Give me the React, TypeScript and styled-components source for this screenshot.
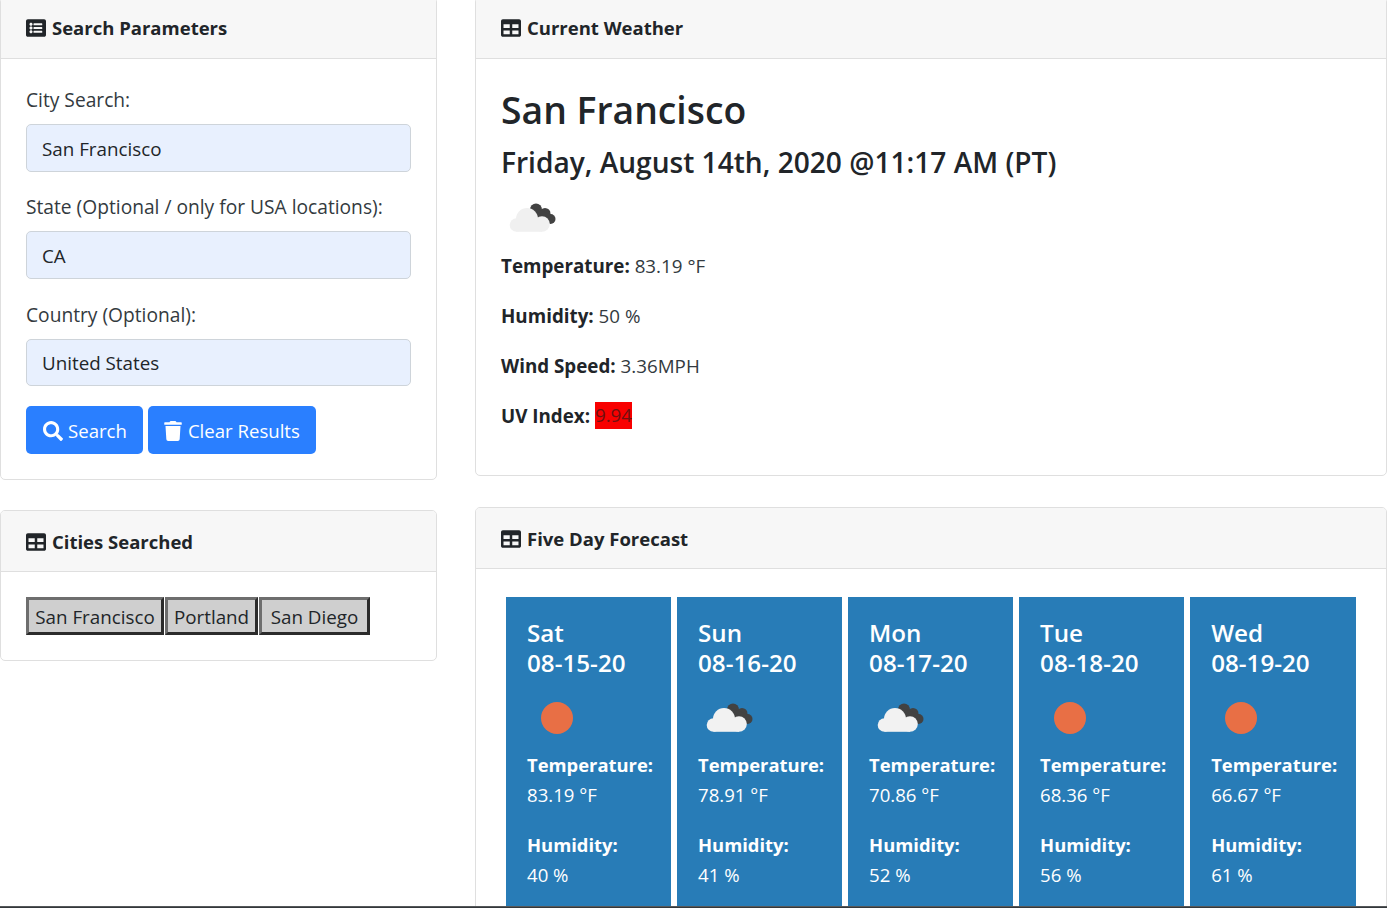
import React from "react";
import styled, { createGlobalStyle } from "styled-components";
import { FaListAlt, FaSearch, FaTable, FaTrash } from "react-icons/fa";

const GlobalStyle = createGlobalStyle`
  html, body {
    margin: 0;
    height: 908px;
    overflow: hidden;
    background: #fff;
  }
  body {
    font-family: "Open Sans", "Noto Sans", sans-serif;
    font-size: 18.8px;
    line-height: 30px;
    color: #212529;
  }
  * {
    box-sizing: border-box;
  }
`;

const Page = styled.div`
  display: grid;
  grid-template-columns: 437px 912px;
  column-gap: 38px;
  margin-top: -3px;
`;

const Column = styled.div`
  display: flex;
  flex-direction: column;
`;

const Card = styled.section<{ $gap?: number }>`
  border: 1px solid #dfdfdf;
  border-radius: 5px;
  margin-bottom: ${(p) => p.$gap ?? 0}px;
  background: #fff;
`;

const CardHeader = styled.header<{ $drop?: number }>`
  display: flex;
  align-items: center;
  gap: 6px;
  height: 61px;
  padding: ${(p) => p.$drop ?? 0}px 25px 1px;
  background: #f7f7f7;
  border-bottom: 1px solid #dfdfdf;
  border-radius: 4px 4px 0 0;
  font-size: 18.5px;
  font-weight: 700;
  svg {
    width: 20px;
    height: 20px;
  }
`;

const CardBody = styled.div`
  padding: 25px;
`;

const FormGroup = styled.div`
  margin-bottom: 19.8px;
`;

const Label = styled.label`
  display: block;
  padding-top: 1px;
  margin-bottom: 9px;
  font-size: 19.2px;
  color: #333a40;
`;

const TextInput = styled.input`
  display: block;
  width: 100%;
  height: 47.5px;
  padding: 2px 15px 0;
  border: 1px solid #ced4da;
  border-radius: 5px;
  background: #e8f0fe;
  font: inherit;
  color: #212529;
  outline: none;
`;

const ButtonRow = styled.div`
  display: flex;
  gap: 5px;
`;

const PrimaryButton = styled.button<{ $iconWidth: number }>`
  display: flex;
  align-items: center;
  gap: 5.5px;
  height: 48px;
  padding: 2px 16px 0 16.5px;
  border: none;
  border-radius: 5px;
  background: #2a7fff;
  color: #fff;
  font: inherit;
  font-size: 18.6px;
  svg {
    width: ${(p) => p.$iconWidth}px;
    height: 20px;
  }
`;

const CityList = styled.div`
  display: flex;
  gap: 1px;
`;

const CityButton = styled.button<{ $width: number }>`
  width: ${(p) => p.$width}px;
  height: 38px;
  padding: 1px 0 0;
  border: 3px solid;
  border-color: #6e6e6e #2b2b2b #2b2b2b #6e6e6e;
  background: #cfcfcf;
  color: #212529;
  font: inherit;
`;

const CityName = styled.h1`
  margin: 0 0 10px;
  padding-top: 2px;
  font-size: 37.3px;
  line-height: 48px;
  font-weight: 600;
`;

const DateLine = styled.h2`
  margin: 0 0 8px;
  font-size: 28.1px;
  line-height: 36px;
  font-weight: 600;
`;

const WeatherIconSlot = styled.div`
  height: 63px;
  padding: 5px 0 8px 5px;
  svg {
    display: block;
  }
`;

const Stat = styled.p`
  margin: 0 0 20px;
  font-size: 18.8px;
  color: #333a40;
  strong {
    color: #212529;
  }
  &:last-child {
    margin-bottom: 19px;
  }
`;

const UvBadge = styled.span`
  display: inline-block;
  height: 27px;
  line-height: 27px;
  vertical-align: 1px;
  background: #f80000;
  color: #6f1010;
`;

const ForecastRow = styled.div`
  display: grid;
  grid-template-columns: repeat(5, 165.4px);
  column-gap: 5.65px;
  padding: 3.5px 5px 0;
`;

const DayCard = styled.article`
  padding: 21px 15px 20px 21px;
  background: #287cb7;
  color: #fff;
`;

const DayTitle = styled.h4`
  margin: 0 0 15px;
  font-size: 24.2px;
  line-height: 30px;
  font-weight: 600;
`;

const DayIconSlot = styled.div`
  height: 57px;
  padding-left: 5px;
  svg {
    display: block;
  }
`;

const DayStat = styled.p`
  margin: 0 0 20px;
  font-size: 18.6px;
  strong {
    display: block;
    font-size: 18.4px;
  }
`;

const BottomEdge = styled.div`
  position: fixed;
  left: 0;
  right: 0;
  bottom: 0;
  height: 2px;
  background: #34383b;
  border-top: 1px solid #55585a;
`;

const Sun = () => (
  <svg width="50" height="50" viewBox="0 0 50 50">
    <circle cx="25" cy="25" r="16" fill="#e86f45" />
  </svg>
);

const Clouds = ({ front }: { front: string }) => (
  <svg width="50" height="50" viewBox="0 0 50 50">
    <g fill="#424242">
      <circle cx="30" cy="16.500" r="6" />
      <circle cx="39" cy="20.500" r="5.500" />
      <circle cx="44.500" cy="26" r="5" />
      <path d="M26 14 46 22 40 32 24 24z" />
    </g>
    <g fill={front}>
      <circle cx="21" cy="26" r="11" />
      <circle cx="10.500" cy="32" r="6.800" />
      <circle cx="36" cy="31" r="7.800" />
      <rect x="10.500" y="28" width="25.500" height="10.800" />
    </g>
  </svg>
);

const cityRows = [
  { label: "City Search:", value: "San Francisco" },
  { label: "State (Optional / only for USA locations):", value: "CA" },
  { label: "Country (Optional):", value: "United States" },
];

const searched = [
  { name: "San Francisco", width: 138 },
  { name: "Portland", width: 93 },
  { name: "San Diego", width: 111 },
];

const days = [
  { day: "Sat", date: "08-15-20", sky: "clear", temp: "83.19", humidity: "40" },
  { day: "Sun", date: "08-16-20", sky: "clouds", temp: "78.91", humidity: "41" },
  { day: "Mon", date: "08-17-20", sky: "clouds", temp: "70.86", humidity: "52" },
  { day: "Tue", date: "08-18-20", sky: "clear", temp: "68.36", humidity: "56" },
  { day: "Wed", date: "08-19-20", sky: "clear", temp: "66.67", humidity: "61" },
];

export default function App() {
  return (
    <>
      <GlobalStyle />
      <Page>
        <Column>
          <Card $gap={30.5}>
            <CardHeader>
              <FaListAlt />
              Search Parameters
            </CardHeader>
            <CardBody>
              {cityRows.map((row) => (
                <FormGroup key={row.label}>
                  <Label>{row.label}</Label>
                  <TextInput defaultValue={row.value} />
                </FormGroup>
              ))}
              <ButtonRow>
                <PrimaryButton $iconWidth={20}>
                  <FaSearch />
                  Search
                </PrimaryButton>
                <PrimaryButton $iconWidth={18}>
                  <FaTrash />
                  Clear Results
                </PrimaryButton>
              </ButtonRow>
            </CardBody>
          </Card>
          <Card>
            <CardHeader $drop={2}>
              <FaTable />
              Cities Searched
            </CardHeader>
            <CardBody>
              <CityList>
                {searched.map((c) => (
                  <CityButton key={c.name} $width={c.width}>
                    {c.name}
                  </CityButton>
                ))}
              </CityList>
            </CardBody>
          </Card>
        </Column>
        <Column>
          <Card $gap={30.5}>
            <CardHeader>
              <FaTable />
              Current Weather
            </CardHeader>
            <CardBody>
              <CityName>San Francisco</CityName>
              <DateLine>Friday, August 14th, 2020 @11:17 AM (PT)</DateLine>
              <WeatherIconSlot>
                <Clouds front="#f0f0f0" />
              </WeatherIconSlot>
              <Stat>
                <strong>Temperature:</strong> 83.19 °F
              </Stat>
              <Stat>
                <strong>Humidity:</strong> 50 %
              </Stat>
              <Stat>
                <strong>Wind Speed:</strong> 3.36MPH
              </Stat>
              <Stat>
                <strong>UV Index:</strong> <UvBadge>9.94</UvBadge>
              </Stat>
            </CardBody>
          </Card>
          <Card>
            <CardHeader $drop={4}>
              <FaTable />
              Five Day Forecast
            </CardHeader>
            <CardBody>
              <ForecastRow>
                {days.map((d) => (
                  <DayCard key={d.day}>
                    <DayTitle>
                      {d.day}
                      <br />
                      {d.date}
                    </DayTitle>
                    <DayIconSlot>
                      {d.sky === "clear" ? <Sun /> : <Clouds front="#f2f2f2" />}
                    </DayIconSlot>
                    <DayStat>
                      <strong>Temperature:</strong>
                      {d.temp} °F
                    </DayStat>
                    <DayStat>
                      <strong>Humidity:</strong>
                      {d.humidity} %
                    </DayStat>
                  </DayCard>
                ))}
              </ForecastRow>
            </CardBody>
          </Card>
        </Column>
      </Page>
      <BottomEdge />
    </>
  );
}
